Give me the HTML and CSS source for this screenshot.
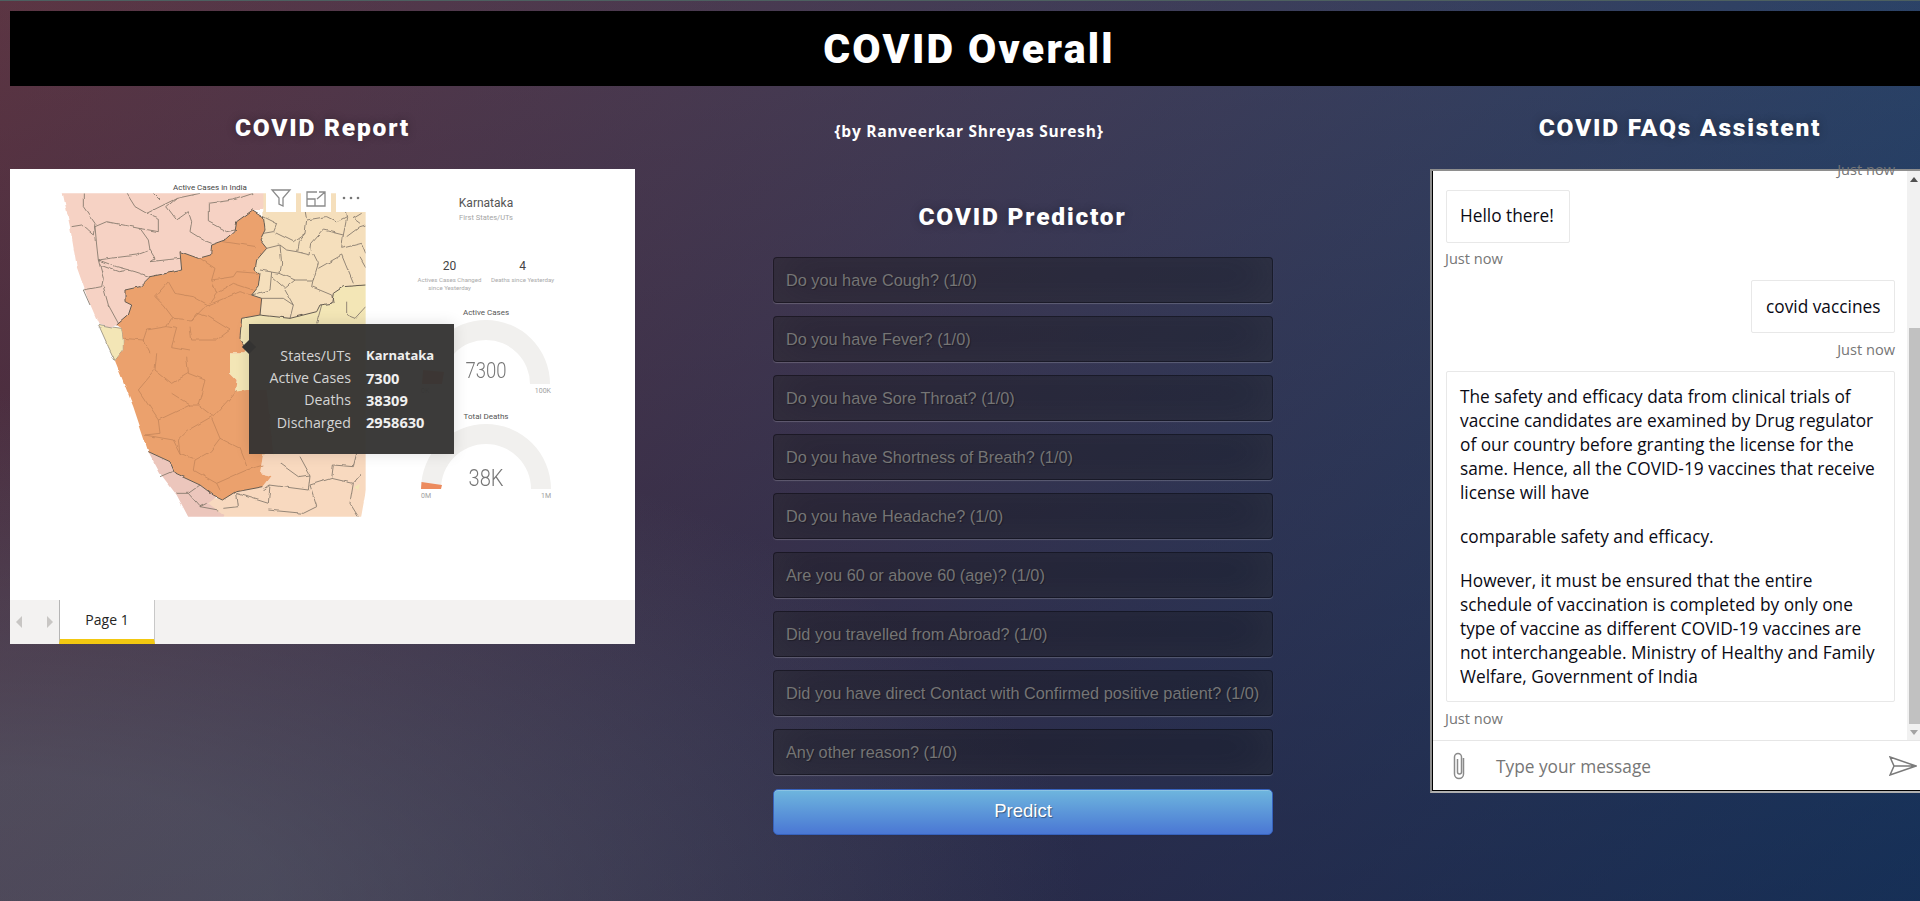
FILE: index.html
```html
<!DOCTYPE html>
<html lang="en">
<head>
<meta charset="utf-8">
<title>COVID Overall</title>
<link rel="stylesheet" href="styles.css">
</head>
<body>
<header class="topbar"><h1 class="title">COVID Overall</h1></header>
<main class="columns">
  <section class="col-report">
    <h2 class="heading heading-tall">COVID Report</h2>
    <div class="report">
      <div class="canvas">
        <div class="map-col">
          <div class="map-title">Active Cases in India</div>
          <svg class="map" viewBox="0 0 930 990">
            <defs>
              <filter id="wiggle" x="-5%" y="-5%" width="110%" height="110%">
                <feTurbulence type="fractalNoise" baseFrequency="0.03" numOctaves="2" seed="4" result="n"/>
                <feDisplacementMap in="SourceGraphic" in2="n" scale="10" xChannelSelector="R" yChannelSelector="G"/>
                <feGaussianBlur stdDeviation="0.7"/>
              </filter>
              <clipPath id="mapclip"><rect x="0" y="10" width="917" height="970"/></clipPath>
            </defs>
            <g clip-path="url(#mapclip)">
            <g filter="url(#wiggle)">
            <path class="r-pink" d="M4,-10L630,-10L610,60L578,60L530,95L525,125L497,150L455,165L452,195L415,205L360,185L365,240L320,250L270,260L240,290L195,300L200,335L215,345L205,375L175,405L150,410L115,400L85,330L50,230L30,110Z"/>
            <path class="r-wheat" d="M610,-10L940,-10L940,285L850,290L820,310L815,340L780,345L770,365L690,385L600,375L605,325L575,315L595,290L600,250L585,240L590,210L620,175L600,150L615,120L610,80Z"/>
            <path class="r-yellow" d="M940,280L850,290L820,310L815,340L780,345L770,365L690,385L600,375L545,385L540,445L555,470L550,490L510,490L510,550L530,570L525,605L550,655L600,660L610,795L940,795Z"/>
            <path class="r-yellow b-dark" d="M115,403L150,410L185,415L190,450L190,480L165,512L145,470Z"/>
            <path class="r-peach" d="M610,790L940,790L925,860L900,1000L470,1000L440,925L490,925L530,905L610,890L635,858L600,850Z"/>
            <path class="r-rose" d="M265,785L330,815L345,850L420,885L470,920L445,940L490,975L480,1000L395,1000L350,915L300,850Z"/>
            <path class="r-orange" d="M578,60L610,80L615,120L600,150L620,175L590,210L585,240L600,250L595,290L575,315L605,325L600,375L545,385L540,445L555,470L550,490L510,490L510,550L530,570L525,605L560,600L620,600L640,790L610,790L600,850L635,858L610,890L530,905L490,930L460,915L420,885L345,850L330,815L265,785L250,740L220,650L165,512L190,480L190,450L185,415L170,405L205,375L215,345L195,335L195,300L240,290L270,260L320,250L365,240L360,185L415,205L452,195L455,165L497,150L525,125L530,95Z"/>
            <g class="l-soft">
              <path d="M70,10L70,50L105,100L100,135L65,105L35,110"/>
              <path d="M105,110L140,95L240,115L265,150L270,180L230,195L150,205L115,210L110,165Z"/>
              <path d="M115,210L130,265L125,290L70,300L90,345"/>
              <path d="M130,290L145,345L175,400"/>
              <path d="M200,10L225,50L260,70L300,50L350,25L420,10"/>
              <path d="M260,70L295,85L295,125L240,115"/>
              <path d="M320,50L350,90L385,65L395,95L390,125L430,150L455,160"/>
              <path d="M445,40L445,95L500,125M445,40L520,30L580,10"/>
              <path d="M270,180L285,205L270,215L360,205"/>
              <path d="M115,210L170,230L225,245L270,260"/>
              <path d="M120,225L175,245L210,240M350,25L320,50M280,10L300,30M500,125L525,120"/>
              <path d="M610,80L650,100L640,125L700,155L735,130L740,90L800,80L830,95L860,80"/>
              <path d="M735,130L715,155L710,185L750,195L755,160L790,120L850,135L860,85"/>
              <path d="M620,175L660,165L680,180L710,185"/>
              <path d="M660,165L665,220L660,250L600,240"/>
              <path d="M660,250L705,270L675,295L635,260M635,245L630,300L575,315"/>
              <path d="M705,270L760,270L775,220L760,190"/>
              <path d="M775,235L845,195L880,280"/>
              <path d="M755,290L815,315L820,340M755,290L760,265"/>
              <path d="M675,300L700,345L690,385M605,325L670,325L700,345"/>
              <path d="M845,175L905,160L917,190M860,140L900,110L917,105M905,70L880,85L900,100M640,125L610,130"/>
              <path d="M785,345L770,400M860,335L860,375L885,385L917,350"/>
              <path d="M850,135L845,175M740,90L735,60M860,85L855,55M900,200L917,230"/>
            </g>
            <g class="l-inner">
              <path d="M420,205L465,235L455,270L520,260L530,245L595,250"/>
              <path d="M490,155L590,170"/>
              <path d="M455,270L470,310L445,345L400,320L345,310L325,275L285,320L310,345L340,385L395,390L440,345"/>
              <path d="M470,310L520,280L580,300"/>
              <path d="M445,345L540,305L575,315"/>
              <path d="M335,385L320,410L260,420L250,450L190,445"/>
              <path d="M395,390L410,370L445,380L510,420L470,450L395,450L390,410"/>
              <path d="M320,410L350,415L335,470L390,480M250,450L270,490"/>
            </g>
            <g transform="translate(0,480)">
              <g class="l-inner">
                <path d="M290,10L285,60L335,100L385,70L380,20"/>
                <path d="M285,60L235,120L295,210L390,165L335,130"/>
                <path d="M385,70L435,90L415,165L390,165M415,165L460,200L505,150L530,120"/>
                <path d="M295,210L300,250L255,255L340,270L360,310L355,270L385,240L455,200"/>
                <path d="M455,205L480,265L450,305L405,330L400,360L470,400L560,360L610,345"/>
                <path d="M480,265L540,295L560,345M360,310L400,325M470,400L480,420"/>
              </g>
              <g class="l-soft">
                <path d="M660,340L715,380L750,375L745,420L630,405L625,460L530,430M750,375L720,320"/>
                <path d="M820,345L880,350L890,310M820,345L815,385L750,405L770,470L730,490L625,480"/>
                <path d="M815,385L880,400L905,370M880,400L870,460L895,500M530,430L535,470L490,475M630,405L610,420"/>
                <path d="M300,380L335,365M350,430L385,430L420,405M385,430L420,470L475,480M420,470L440,460"/>
              </g>
              <path class="r-yellow" d="M880,415L900,405L895,422Z"/>
            </g>
            <path class="b-outer" d="M578,60L610,80L615,120L600,150L620,175L590,210L585,240L600,250L595,290L575,315L605,325L600,375L545,385L540,445L555,470M610,890L530,905L490,930L460,915L420,885L345,850L330,815L265,785M170,405L205,375L215,345L195,335L195,300L240,290L270,260L320,250L365,240L360,185L415,205L452,195L455,165L497,150L525,125L530,95L578,60M917,285L850,290L820,310L815,340L780,345L770,365L690,385L600,375"/>
            </g>
            </g>
          </svg>
        </div>
        <div class="panel">
          <div class="panel-name">Karnataka</div>
          <div class="panel-sub">First States/UTs</div>
          <div class="kpis">
            <div class="kpi"><div class="kpi-num">20</div><div class="kpi-label">Actives Cases Changed<br>since Yesterday</div></div>
            <div class="kpi"><div class="kpi-num">4</div><div class="kpi-label">Deaths since Yesterday</div></div>
          </div>
          <div class="gauge-title gauge-title-first">Active Cases</div>
          <div class="gauge gauge-first">
            <svg class="gauge-svg" viewBox="0 0 130 66">
              <path class="arc" d="M1,66A64,64 0 0 1 129,66L109,66A44,44 0 0 0 21,66Z"/>
              <path class="slice" d="M1,66L2,52L23,54L21,66Z"/>
            </svg>
            <div class="gauge-value gauge-value-a">7300</div>
          </div>
          <div class="gauge-scale"><span>0K</span><span>100K</span></div>
          <div class="gauge-title gauge-title-next">Total Deaths</div>
          <div class="gauge">
            <svg class="gauge-svg" viewBox="0 0 130 66">
              <path class="arc" d="M0,66A65,65 0 0 1 130,66L110,66A45,45 0 0 0 20,66Z"/>
              <path class="slice" d="M0,66L0.5,59L21,62L20,66Z"/>
            </svg>
            <div class="gauge-value gauge-value-b">38K</div>
          </div>
          <div class="gauge-scale"><span>0M</span><span>1M</span></div>
        </div>
        <div class="visual-tools">
          <span class="tool"><svg class="tool-icon" viewBox="0 0 20 18"><path d="M1,1H19L12,9V17L8,15V9Z"/></svg></span>
          <span class="tool"><svg class="tool-icon" viewBox="0 0 20 16"><path d="M11,1H1V15H19V7M1,8H9V15M13,1H19V7M19,1L11,8"/></svg></span>
          <span class="tool"><svg class="tool-icon" viewBox="0 0 20 4"><circle cx="3" cy="2" r="1.3"/><circle cx="10" cy="2" r="1.3"/><circle cx="17" cy="2" r="1.3"/></svg></span>
        </div>
        <div class="tooltip">
          <div class="tip-label">States/UTs</div><div class="tip-value tip-name">Karnataka</div>
          <div class="tip-label">Active Cases</div><div class="tip-value">7300</div>
          <div class="tip-label">Deaths</div><div class="tip-value">38309</div>
          <div class="tip-label">Discharged</div><div class="tip-value">2958630</div>
        </div>
      </div>
      <div class="tabbar">
        <div class="tab-nav"><span class="arrow arrow-left"></span><span class="arrow arrow-right"></span></div>
        <div class="tab">Page 1</div>
      </div>
    </div>
  </section>

  <section class="col-predict">
    <div class="byline">{by Ranveerkar Shreyas Suresh}</div>
    <h2 class="heading heading-predict">COVID Predictor</h2>
    <form class="form">
      <input class="field" type="text" placeholder="Do you have Cough? (1/0)">
      <input class="field" type="text" placeholder="Do you have Fever? (1/0)">
      <input class="field" type="text" placeholder="Do you have Sore Throat? (1/0)">
      <input class="field" type="text" placeholder="Do you have Shortness of Breath? (1/0)">
      <input class="field" type="text" placeholder="Do you have Headache? (1/0)">
      <input class="field" type="text" placeholder="Are you 60 or above 60 (age)? (1/0)">
      <input class="field" type="text" placeholder="Did you travelled from Abroad? (1/0)">
      <input class="field" type="text" placeholder="Did you have direct Contact with Confirmed positive patient? (1/0)">
      <input class="field" type="text" placeholder="Any other reason? (1/0)">
      <button class="predict" type="button">Predict</button>
    </form>
  </section>

  <section class="col-chat">
    <h2 class="heading heading-tall heading-chat">COVID FAQs Assistent</h2>
    <div class="chat">
      <div class="chat-body">
        <div class="messages">
          <div class="stamp stamp-right stamp-clipped">Just now</div>
          <div class="bubble bubble-hello">Hello there!</div>
          <div class="stamp stamp-hello">Just now</div>
          <div class="bubble bubble-user">covid vaccines</div>
          <div class="stamp stamp-right">Just now</div>
          <div class="bubble bubble-long">
            <p class="para">The safety and efficacy data from clinical trials of<br>vaccine candidates are examined by Drug regulator<br>of our country before granting the license for the<br>same. Hence, all the COVID-19 vaccines that receive<br>license will have</p>
            <p class="para">comparable safety and efficacy.</p>
            <p class="para">However, it must be ensured that the entire<br>schedule of vaccination is completed by only one<br>type of vaccine as different COVID-19 vaccines are<br>not interchangeable. Ministry of Healthy and Family<br>Welfare, Government of India</p>
          </div>
          <div class="stamp">Just now</div>
        </div>
        <div class="scrollbar">
          <span class="sb-arrow sb-up"></span>
          <span class="sb-track"><span class="sb-thumb"></span></span>
          <span class="sb-arrow sb-down"></span>
        </div>
      </div>
      <div class="composer">
        <svg class="clip" viewBox="0 0 14 28"><path d="M11.5,6V22a4.5,4.5 0 0 1 -9,0V5a3.5,3.5 0 0 1 7,0V20a2,2 0 0 1 -4,0V7"/></svg>
        <span class="composer-text">Type your message</span>
        <svg class="send" viewBox="0 0 28 20"><path d="M1,1L27,10L1,19L5,10ZM5,10H27"/></svg>
      </div>
    </div>
  </section>
</main>
</body>
</html>
```
FILE: styles.css
```css
* { box-sizing: border-box; }
html {
  height: 100%;
  background:
    linear-gradient(#4d6060, #4d6060) top left / 100% 1px no-repeat,
    radial-gradient(ellipse farthest-corner at 0% 100%, rgba(104,128,138,.4) 10%, rgba(138,114,76,0) 40%),
    linear-gradient(to bottom, rgba(57,173,219,.25) 0%, rgba(42,60,87,.4) 100%),
    linear-gradient(135deg, #670d10 0%, #092756 100%);
}
body {
  margin: 0;
  height: 901px;
  overflow: hidden;
  padding: 11px 0 0 10px;
  font-family: "Open Sans", sans-serif;
  color: #fff;
}
.topbar { height: 75px; background: #000; display: flex; align-items: center; justify-content: center; padding: 2px 0 0 8px; }
.title, .heading {
  margin: 0;
  font-family: Roboto, "Liberation Sans", Arial, sans-serif;
  font-weight: 900;
  color: #fff;
  text-shadow: 0 0 10px rgba(0,0,0,.3);
}
.title { font-size: 41px; letter-spacing: 2.3px; line-height: 73px; }
.heading { font-size: 24.5px; letter-spacing: 1.8px; text-align: center; }
.heading-tall { height: 83px; line-height: 83px; }
.heading-chat { padding-left: 10px; }
.heading-predict { height: 79px; line-height: 77px; margin-left: -20px; }
.columns { display: grid; grid-template-columns: 625px 795px 490px; }

/* report */
.report { width: 625px; height: 475px; background: #fff; display: flex; flex-direction: column; color: #444; }
.canvas { position: relative; flex: 0 0 431px; display: flex; overflow: hidden; }
.map-col { width: 310px; margin-left: 50px; position: relative; padding-top: 15px; }
.map-title { font: 8px/8px Roboto, sans-serif; color: #444; text-align: center; width: 300px; }
.map { display: block; width: 310px; height: 330px; margin-top: -2px; }
.r-pink { fill: #f6d2c4; }
.r-wheat { fill: #f5dfbc; }
.r-yellow { fill: #f3e6b6; }
.r-peach { fill: #f8d9bf; }
.r-rose { fill: #ecc6bc; }
.r-orange { fill: #eba16d; }
.b-dark { stroke: #7d7468; stroke-width: 2; }
.l-soft path { fill: none; stroke: #84786c; stroke-width: 2.6; stroke-linejoin: round; }
.l-inner path { fill: none; stroke: #c4855a; stroke-width: 2.4; stroke-linejoin: round; }
.b-outer { fill: none; stroke: #655b50; stroke-width: 3; stroke-linejoin: round; }

.panel { width: 180px; margin-left: 26px; padding-top: 27px; display: flex; flex-direction: column; align-items: center; font-family: Roboto, sans-serif; }
.panel-name { font-size: 12px; line-height: 14px; color: #555; }
.panel-sub { margin-top: 2px; font-size: 7.5px; line-height: 11px; color: #a5a5a5; }
.kpis { margin-top: 36px; display: flex; width: 146px; }
.kpi { flex: 1; text-align: center; white-space: nowrap; }
.kpi-num { font-size: 12px; line-height: 14px; color: #444; }
.kpi-label { margin-top: 3px; font-size: 6.1px; line-height: 8px; color: #aaa; }
.gauge-title { font-size: 8px; line-height: 8px; color: #555; }
.gauge-title-first { margin-top: 17px; }
.gauge-title-next { margin-top: 18px; }
.gauge { position: relative; width: 130px; height: 66px; margin-top: 2px; flex: none; }
.gauge-first { margin-top: 1px; }
.gauge-svg { display: block; width: 130px; height: 66px; }
.arc { fill: #f1f0ee; }
.slice { fill: #ec8b5e; }
.gauge-value { position: absolute; left: 0; right: 0; text-align: center; font-weight: 300; font-size: 22px; line-height: 24px; color: #777; transform: scaleX(.84); }
.gauge-value-a { top: 41px; }
.gauge-value-b { top: 43px; font-size: 24px; }
.gauge-scale { width: 130px; display: flex; justify-content: space-between; font-size: 7px; line-height: 8px; color: #a0a0a0; margin-top: 3px; }

.visual-tools { position: absolute; left: 256px; top: 24px; display: flex; gap: 5px; }
.tool { width: 30px; height: 19px; background: #fff; display: flex; justify-content: center; align-items: flex-start; }
.tool-icon { display: block; width: 20px; height: 18px; margin-top: -4px; fill: none; stroke: #8b8b8b; stroke-width: 1.3; overflow: visible; }
.tool:last-child .tool-icon { width: 20px; height: 4px; margin-top: 3px; fill: #777; stroke: none; }
.tool:nth-child(2) .tool-icon { height: 16px; margin-top: -2px; }

.tooltip {
  position: absolute; left: 239px; top: 155px; width: 205px; height: 130px;
  background: rgba(52,51,50,.96);
  box-shadow: 0 0 14px rgba(0,0,0,.12);
  display: grid; grid-template-columns: 102px auto; column-gap: 15px; grid-auto-rows: 22.4px;
  padding-top: 20px; align-items: center;
  font-family: "Open Sans", sans-serif; color: #d4d4d4;
}
.tooltip::before { content: ""; position: absolute; left: -5px; top: 18px; width: 10px; height: 10px; background: #343332; transform: rotate(45deg); }
.tip-label { text-align: right; white-space: nowrap; font-size: 14.2px; }
.tip-value { font-weight: 700; color: #f0f0f0; font-size: 14.6px; }
.tip-name { font-size: 13px; }

.tabbar { flex: 1; min-height: 0; background: #f3f2f1; display: flex; }
.tab-nav { width: 49px; display: flex; align-items: center; justify-content: space-between; padding: 0 4px 0 6px; }
.arrow { width: 0; height: 0; border-style: solid; border-color: transparent; border-width: 6px 0; }
.arrow-left { border-right: 6px solid #c8c6c4; }
.arrow-right { border-left: 6px solid #c8c6c4; margin-right: 2px; }
.tab { width: 96px; height: 44px; background: #fff; border-left: 1px solid #b5b5b5; border-right: 1px solid #c8c8c8; border-bottom: 5px solid #f2c811; text-align: center; font-size: 14px; line-height: 39px; color: #252423; }

/* predictor */
.byline { height: 92px; line-height: 90px; text-align: center; margin-left: -127px; font-size: 15.5px; font-weight: 700; letter-spacing: .75px; }
.form { width: 500px; margin-left: 138px; display: flex; flex-direction: column; gap: 13px; }
.field {
  display: block; width: 500px; height: 46px; padding: 1px 12px 0; margin: 0;
  font: 16.3px "Liberation Sans", Arial, sans-serif; color: #fff;
  background: rgba(0,0,0,.3); border: 1px solid rgba(0,0,0,.3); border-radius: 4px; outline: 0;
  box-shadow: inset 0 -5px 45px rgba(100,100,100,.2), 0 1px 1px rgba(255,255,255,.2);
  text-shadow: 1px 1px 1px rgba(0,0,0,.3);
}
.field::placeholder { color: #757575; opacity: 1; }
.predict {
  width: 500px; height: 46px; margin-top: 1px; padding: 0 0 2px;
  font: 18.5px "Liberation Sans", Arial, sans-serif; color: #fff;
  background: #4a77d4 linear-gradient(to bottom, #6eb6de, #4a77d4);
  border: 1px solid #3762bc; border-radius: 5px;
  text-shadow: 1px 1px 1px rgba(0,0,0,.4);
  box-shadow: inset 0 1px 0 rgba(255,255,255,.2), 0 1px 2px rgba(0,0,0,.05);
}

/* chat */
.chat { width: 490px; height: 624px; background: #fff; border: 2px solid #8e8e8e; border-right: 0; border-bottom-color: #b0b0b0; box-shadow: inset 1px 0 0 #000, inset 0 -1px 0 #000; display: flex; flex-direction: column; color: #000; position: relative; }
.chat-body { height: 570px; display: flex; flex: none; border-bottom: 1px solid #e6e6e6; margin-left: 1px; }
.messages { flex: 1; overflow: hidden; padding: 0 12px 0 13px; margin-top: -11px; display: flex; flex-direction: column; }
.bubble { background: #fff; border: 1px solid #e8e8e8; border-radius: 2px; font-size: 17.3px; line-height: 24px; padding: 13px 13px; flex: none; color: #0a0a14; white-space: nowrap; }
.bubble-hello { align-self: flex-start; width: 124px; height: 53px; margin-top: 12px; }
.bubble-user { align-self: flex-end; width: 144px; height: 53px; margin-top: 13px; padding: 14px 0 0 14px; }
.bubble-long { margin-top: 13px; height: 331px; padding-top: 13px; }
.para { margin: 0 0 20px; }
.para:last-child { margin-bottom: 0; }
.stamp { font-size: 14.6px; line-height: 18px; height: 18px; margin-top: 7px; color: #767676; flex: none; margin-left: -1px; }
.stamp-hello { margin-top: 6px; }
.stamp-right { align-self: flex-end; margin-left: 0; }
.stamp-clipped { margin-top: 0; }
.scrollbar { width: 13px; background: #f1f1f1; display: flex; flex-direction: column; align-items: center; flex: none; }
.sb-arrow { flex: none; width: 0; height: 0; border-style: solid; border-color: transparent; margin: 5px 0; }
.sb-up { border-width: 0 4px 5px; border-bottom-color: #505050; margin: 6px 0; }
.sb-down { border-width: 5px 4px 0; border-top-color: #a3a3a3; margin: 6px 0 5px; }
.sb-track { flex: 1; width: 100%; padding: 140px 0 0 2px; display: flex; }
.sb-thumb { width: 100%; background: #c1c1c1; }
.composer { flex: 1; display: flex; align-items: center; padding-left: 19px; margin-left: 1px; margin-bottom: 1px; }
.clip { width: 14px; height: 28px; fill: none; stroke: #8a8a8a; stroke-width: 1.5; flex: none; }
.composer-text { margin-left: 30px; padding-top: 2px; font-size: 17.3px; color: #767676; flex: 1; }
.send { width: 28px; height: 20px; fill: none; stroke: #7a7a7a; stroke-width: 1.5; flex: none; margin-right: 3px; }
```
